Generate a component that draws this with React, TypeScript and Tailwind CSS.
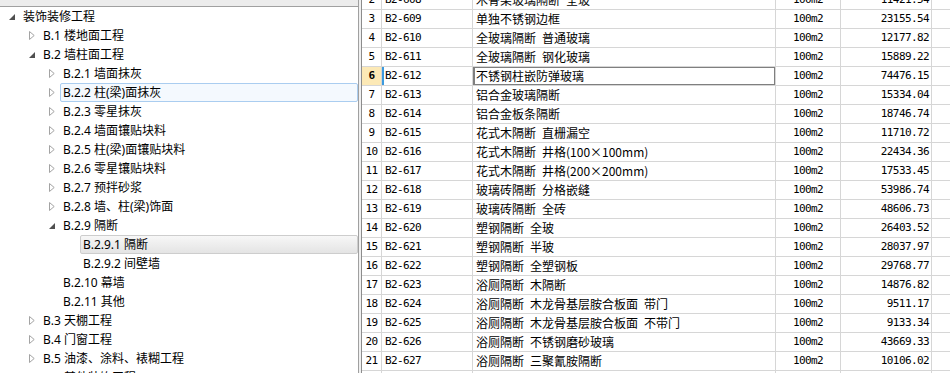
type TreeNode = { level: number; label: string; state: "open" | "closed" | "leaf"; mark?: "hover" | "selected" };

const tree: TreeNode[] = [
  { level: 0, label: "装饰装修工程", state: "open" },
  { level: 1, label: "B.1 楼地面工程", state: "closed" },
  { level: 1, label: "B.2 墙柱面工程", state: "open" },
  { level: 2, label: "B.2.1 墙面抹灰", state: "closed" },
  { level: 2, label: "B.2.2 柱(梁)面抹灰", state: "closed", mark: "hover" },
  { level: 2, label: "B.2.3 零星抹灰", state: "closed" },
  { level: 2, label: "B.2.4 墙面镶贴块料", state: "closed" },
  { level: 2, label: "B.2.5 柱(梁)面镶贴块料", state: "closed" },
  { level: 2, label: "B.2.6 零星镶贴块料", state: "closed" },
  { level: 2, label: "B.2.7 预拌砂浆", state: "closed" },
  { level: 2, label: "B.2.8 墙、柱(梁)饰面", state: "closed" },
  { level: 2, label: "B.2.9 隔断", state: "open" },
  { level: 3, label: "B.2.9.1 隔断", state: "leaf", mark: "selected" },
  { level: 3, label: "B.2.9.2 间壁墙", state: "leaf" },
  { level: 2, label: "B.2.10 幕墙", state: "leaf" },
  { level: 2, label: "B.2.11 其他", state: "leaf" },
  { level: 1, label: "B.3 天棚工程", state: "closed" },
  { level: 1, label: "B.4 门窗工程", state: "closed" },
  { level: 1, label: "B.5 油漆、涂料、裱糊工程", state: "closed" },
  { level: 1, label: "B.6 其他装饰工程", state: "closed" },
];

const rows: [number, string, string, string][] = [
  [2, "B2-608", "木骨架玻璃隔断 全玻", "11421.54"],
  [3, "B2-609", "单独不锈钢边框", "23155.54"],
  [4, "B2-610", "全玻璃隔断 普通玻璃", "12177.82"],
  [5, "B2-611", "全玻璃隔断 钢化玻璃", "15889.22"],
  [6, "B2-612", "不锈钢柱嵌防弹玻璃", "74476.15"],
  [7, "B2-613", "铝合金玻璃隔断", "15334.04"],
  [8, "B2-614", "铝合金板条隔断", "18746.74"],
  [9, "B2-615", "花式木隔断 直栅漏空", "11710.72"],
  [10, "B2-616", "花式木隔断 井格(100×100mm)", "22434.36"],
  [11, "B2-617", "花式木隔断 井格(200×200mm)", "17533.45"],
  [12, "B2-618", "玻璃砖隔断 分格嵌缝", "53986.74"],
  [13, "B2-619", "玻璃砖隔断 全砖", "48606.73"],
  [14, "B2-620", "塑钢隔断 全玻", "26403.52"],
  [15, "B2-621", "塑钢隔断 半玻", "28037.97"],
  [16, "B2-622", "塑钢隔断 全塑钢板", "29768.77"],
  [17, "B2-623", "浴厕隔断 木隔断", "14876.82"],
  [18, "B2-624", "浴厕隔断 木龙骨基层胺合板面 带门", "9511.17"],
  [19, "B2-625", "浴厕隔断 木龙骨基层胺合板面 不带门", "9133.34"],
  [20, "B2-626", "浴厕隔断 不锈钢磨砂玻璃", "43669.33"],
  [21, "B2-627", "浴厕隔断 三聚氰胺隔断", "10106.02"],
  [22, "B2-628", "浴厕隔断 塑钢隔断", "12830.51"],
];

const SELECTED_ROW = 6;

function Expander({ state }: { state: TreeNode["state"] }) {
  return (
    <div className="w-[16px] h-full flex items-center justify-center shrink-0">
      {state === "closed" && (
        <svg width="6" height="9" viewBox="0 0 6 9">
          <path d="M0.5 0.5 L5.2 4.5 L0.5 8.5 Z" fill="#fff" stroke="#a3a3a3" strokeWidth="1" />
        </svg>
      )}
      {state === "open" && (
        <svg width="6" height="6" viewBox="0 0 6 6">
          <path d="M6 0 L6 6 L0 6 Z" fill="#505050" />
        </svg>
      )}
    </div>
  );
}

function TreeRow({ node }: { node: TreeNode }) {
  const box =
    node.mark === "hover"
      ? "border-[#aacdf0] bg-[#f4f9fe]"
      : node.mark === "selected"
      ? "border-[#cdcdcd] bg-gradient-to-b from-[#f7f7f7] to-[#e4e4e4]"
      : "border-transparent";
  return (
    <div className="h-[19px] flex items-center" style={{ paddingLeft: 4 + node.level * 20 }}>
      <Expander state={node.state} />
      <div className={`flex-1 h-[19px] flex items-center pl-[2px] border rounded-[2px] ${box}`}>
        <span className="whitespace-nowrap">{node.label}</span>
      </div>
    </div>
  );
}

function GridRow({ row }: { row: [number, string, string, string] }) {
  const [n, code, name, amount] = row;
  const sel = n === SELECTED_ROW;
  return (
    <div className="h-[19px] flex border-b border-[#d6d6d6] relative">
      <div
        className={`w-[20px] shrink-0 border-r border-[#d6d6d6] flex items-center justify-center font-['DejaVu_Sans_Mono',monospace] text-[11px] tracking-[-0.6px] ${
          sel ? "bg-[#fce9b6] font-bold" : ""
        }`}
      >
        {n}
      </div>
      <div className="w-[91px] shrink-0 border-r border-[#d6d6d6] flex items-center pl-[3px] font-['DejaVu_Sans_Mono',monospace] text-[11px] tracking-[-0.6px] relative">
        {sel && <span className="absolute left-0 top-0 bottom-0 w-[2px] bg-[#3c9ade]" />}
        {code}
      </div>
      <div className="w-[303px] shrink-0 border-r border-[#d6d6d6] flex items-center pl-[3px] whitespace-nowrap overflow-hidden relative font-['Noto_Sans_CJK_SC',sans-serif]">
        {name.split(" ").map((part, i) => (
          <span key={i} className={i ? "ml-[6px]" : ""}>
            {part}
          </span>
        ))}
        {sel && <span className="absolute left-0 right-[-1px] top-[-1px] bottom-[-1px] border-2 border-[#7f7f7f]" />}
      </div>
      <div className="w-[65px] shrink-0 border-r border-[#d6d6d6] flex items-center justify-center font-['DejaVu_Sans_Mono',monospace] text-[11px] tracking-[-0.6px]">
        100m2
      </div>
      <div className="w-[91px] shrink-0 border-r border-[#d6d6d6] flex items-center justify-end pr-[2px] font-['DejaVu_Sans_Mono',monospace] text-[11px] tracking-[-0.6px]">
        {amount}
      </div>
    </div>
  );
}

export default function App() {
  return (
    <div className="w-[950px] h-[373px] flex overflow-hidden bg-white text-black text-[12px] font-['Noto_Sans','Noto_Sans_CJK_SC',sans-serif]">
      {/* Tree panel */}
      <div className="w-[359px] shrink-0 flex flex-col border-r border-[#a0a0a0] overflow-hidden">
        <div className="h-[7px] shrink-0 bg-[#ececec] border-b border-[#a0a0a0]" />
        <div className="flex flex-col">
          {tree.map((node, i) => (
            <TreeRow key={i} node={node} />
          ))}
        </div>
      </div>

      {/* Splitter */}
      <div className="w-[3px] shrink-0 bg-[#f0f0f0] border-r border-[#8c8c8c]" />

      {/* Grid */}
      <div className="flex-1 overflow-hidden bg-white">
        <div className="-mt-[9px] flex flex-col">
          {rows.map((row) => (
            <GridRow key={row[0]} row={row} />
          ))}
        </div>
      </div>
    </div>
  );
}
